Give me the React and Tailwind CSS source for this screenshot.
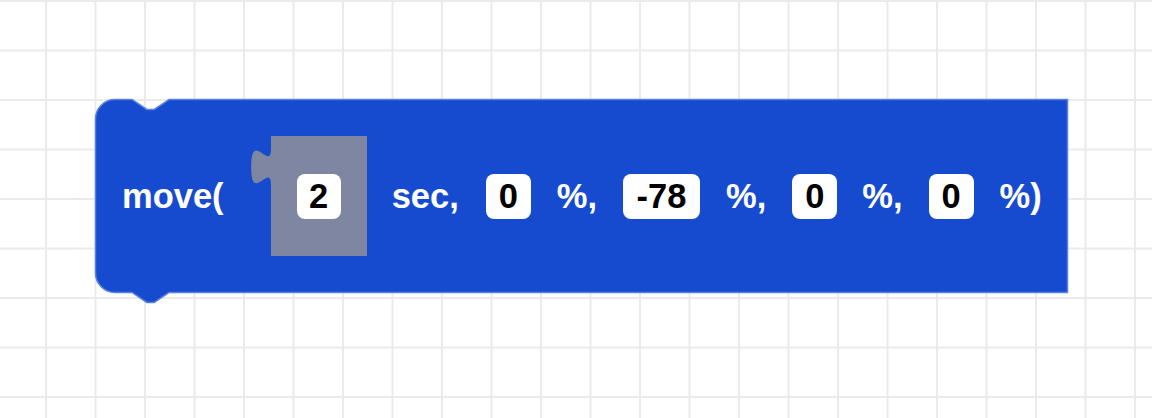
import React from "react";

const BLOCK_PATH =
  "M 0.5,20 A 19.5,19.5 0 0 1 20,0.5 H 37 l 14.85,9.9 7.43,0 14.85,-9.9 H 972.5 V 193.5 H 74.1 l -14.85,9.9 -7.43,0 -14.85,-9.9 H 20 A 19.5,19.5 0 0 1 0.5,174 Z";

const SHADOW_PATH =
  "M 20,0 H 116 V 120 H 20 V 49.5 c 0,-24.75 -19.8,19.8 -19.8,-18.56 s 19.8,6.19 19.8,-18.56 Z";

function Label({ children, className = "" }) {
  return (
    <span className={`relative text-[34.5px] font-bold leading-none text-white whitespace-pre ${className}`}>
      {children}
    </span>
  );
}

function Field({ value, className = "" }) {
  return (
    <span
      className={`relative flex h-[45px] shrink-0 items-center justify-center rounded-[8px] bg-white text-[34.5px] font-bold leading-none text-black ${className}`}
    >
      {value}
    </span>
  );
}

export default function App() {
  return (
    <div
      className="h-[418px] w-full overflow-hidden bg-white bg-[linear-gradient(to_right,#ebebeb_2px,transparent_2px),linear-gradient(to_bottom,#ebebeb_2px,transparent_2px)] bg-[size:49.5px_49.5px] bg-[position:-4.5px_0px] pl-[95px] pt-[99px]"
      style={{ fontFamily: '"Liberation Sans", Arial, sans-serif' }}
    >
      <div className="relative flex h-[194px] w-[973px] items-center pl-[27px]">
        <svg className="absolute left-0 top-0 overflow-visible" width="973" height="194">
          <path d={BLOCK_PATH} fill="#174bcf" stroke="#5a80e2" strokeWidth="1.5" />
        </svg>

        <Label>move(</Label>

        <div className="relative ml-[47px] flex h-[120px] w-[96px] shrink-0 items-center justify-center">
          <svg className="absolute left-[-20px] top-0 overflow-visible" width="116" height="120">
            <path d={SHADOW_PATH} fill="#7e86a2" />
          </svg>
          <Field value="2" className="w-[44px]" />
        </div>

        <Label className="ml-[25px]">sec,</Label>
        <Field value="0" className="ml-[27px] w-[45px]" />
        <Label className="ml-[26px]">%,</Label>
        <Field value="-78" className="ml-[26px] w-[77px]" />
        <Label className="ml-[26px]">%,</Label>
        <Field value="0" className="ml-[26px] w-[45px]" />
        <Label className="ml-[25px]">%,</Label>
        <Field value="0" className="ml-[26px] w-[45px]" />
        <Label className="ml-[26px]">%)</Label>
      </div>
    </div>
  );
}
